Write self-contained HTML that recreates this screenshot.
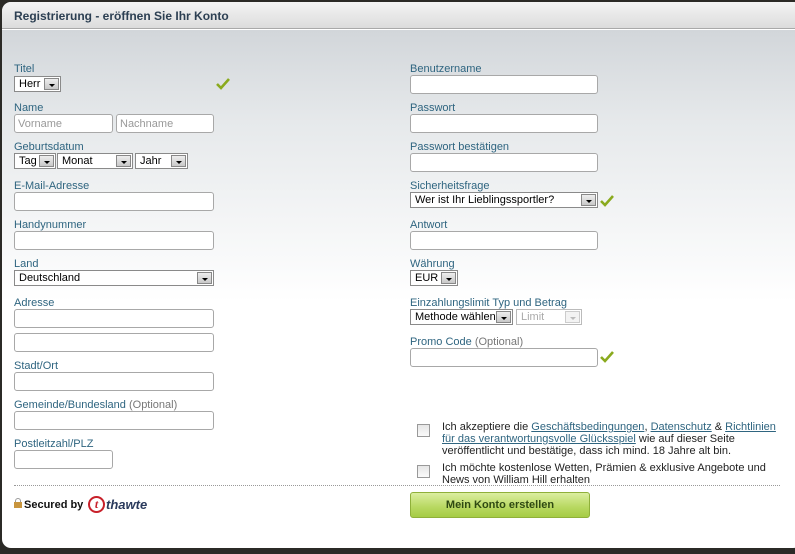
<!DOCTYPE html>
<html><head><meta charset="utf-8"><style>
*{box-sizing:border-box;margin:0;padding:0}
body{width:795px;height:554px;background:#2b2a26;position:relative;overflow:hidden;font-family:"Liberation Sans",Arial,sans-serif;font-size:11px}
#dlg{position:absolute;left:2px;top:2px;width:800px;height:546px;border-radius:9px;background:linear-gradient(#d2d6da 28px,#e6e9eb 120px,#fff 300px,#fff);overflow:hidden}
#hd{position:absolute;left:0;top:0;width:100%;height:27px;background:linear-gradient(#f4f4f4,#dcdcdc);border-bottom:1px solid #a9a9a9;box-shadow:0 1px 0 #fff}
#hd span{position:absolute;left:12px;top:7px;font-weight:bold;font-size:12px;color:#2c3f52}
.l{position:absolute;color:#2f6580;font-size:11px;white-space:nowrap}
.l i{font-style:normal;color:#777}
.in{position:absolute;height:19px;border:1px solid #a8a8a8;border-radius:3px;background:#fff;color:#999;padding:3px 3px;font-size:11px}
.sel{position:absolute;height:16px;border:1px solid #8a8a8a;background:#fff;color:#000;font-size:11px;padding:1px 4px;white-space:nowrap;overflow:hidden}
.sel b{position:absolute;right:1px;top:1px;width:15px;height:12px;background:linear-gradient(#eee,#c8c8c8);border:1px solid #888}
.sel b:after{content:"";position:absolute;left:4px;top:5px;border-left:3px solid transparent;border-right:3px solid transparent;border-top:3px solid #000}
.dis{color:#aaa;border-color:#bbb}.dis b{border-color:#ccc;background:#f3f3f3}.dis b:after{border-top-color:#bbb}
.ck{position:absolute;width:14px;height:12px}
.cb{position:absolute;width:13px;height:13px;border:1px solid #999;background:linear-gradient(#e6e6e6,#fafafa)}
.t{position:absolute;left:440px;width:340px;font-size:11px;line-height:12px;color:#222}
.t a{color:#2f6580;text-decoration:underline}
</style></head><body>
<div id="dlg">
<div id="hd"><span>Registrierung - eröffnen Sie Ihr Konto</span></div>
</div>
<svg width="0" height="0" style="position:absolute"><defs><symbol id="c" viewBox="0 0 14 12"><path d="M1 6 L5 10 L13 1" stroke="#8aaa1e" stroke-width="2.6" fill="none"/></symbol></defs></svg>

<div class="l" style="left:14px;top:63px">Titel</div>
<div class="sel" style="left:14px;top:76px;width:47px">Herr<b></b></div>
<svg class="ck" style="left:216px;top:78px"><use href="#c"/></svg>
<div class="l" style="left:14px;top:102px">Name</div>
<div class="in" style="left:14px;top:114px;width:99px">Vorname</div>
<div class="in" style="left:116px;top:114px;width:98px">Nachname</div>
<div class="l" style="left:14px;top:141px">Geburtsdatum</div>
<div class="sel" style="left:14px;top:153px;width:42px">Tag<b></b></div>
<div class="sel" style="left:57px;top:153px;width:76px">Monat<b></b></div>
<div class="sel" style="left:135px;top:153px;width:53px">Jahr<b></b></div>
<div class="l" style="left:14px;top:180px">E-Mail-Adresse</div>
<div class="in" style="left:14px;top:192px;width:200px"></div>
<div class="l" style="left:14px;top:219px">Handynummer</div>
<div class="in" style="left:14px;top:231px;width:200px"></div>
<div class="l" style="left:14px;top:258px">Land</div>
<div class="sel" style="left:14px;top:270px;width:200px">Deutschland<b></b></div>
<div class="l" style="left:14px;top:297px">Adresse</div>
<div class="in" style="left:14px;top:309px;width:200px"></div>
<div class="in" style="left:14px;top:333px;width:200px"></div>
<div class="l" style="left:14px;top:360px">Stadt/Ort</div>
<div class="in" style="left:14px;top:372px;width:200px"></div>
<div class="l" style="left:14px;top:399px">Gemeinde/Bundesland <i>(Optional)</i></div>
<div class="in" style="left:14px;top:411px;width:200px"></div>
<div class="l" style="left:14px;top:438px">Postleitzahl/PLZ</div>
<div class="in" style="left:14px;top:450px;width:99px"></div>

<div class="l" style="left:410px;top:63px">Benutzername</div>
<div class="in" style="left:410px;top:75px;width:188px"></div>
<div class="l" style="left:410px;top:102px">Passwort</div>
<div class="in" style="left:410px;top:114px;width:188px"></div>
<div class="l" style="left:410px;top:141px">Passwort bestätigen</div>
<div class="in" style="left:410px;top:153px;width:188px"></div>
<div class="l" style="left:410px;top:180px">Sicherheitsfrage</div>
<div class="sel" style="left:410px;top:192px;width:188px">Wer ist Ihr Lieblingssportler?<b></b></div>
<svg class="ck" style="left:600px;top:195px"><use href="#c"/></svg>
<div class="l" style="left:410px;top:219px">Antwort</div>
<div class="in" style="left:410px;top:231px;width:188px"></div>
<div class="l" style="left:410px;top:258px">Währung</div>
<div class="sel" style="left:410px;top:270px;width:48px">EUR<b></b></div>
<div class="l" style="left:410px;top:297px">Einzahlungslimit Typ und Betrag</div>
<div class="sel" style="left:410px;top:309px;width:103px">Methode wählen<b></b></div>
<div class="sel dis" style="left:516px;top:309px;width:66px">Limit<b></b></div>
<div class="l" style="left:410px;top:336px">Promo Code <i>(Optional)</i></div>
<div class="in" style="left:410px;top:348px;width:188px"></div>
<svg class="ck" style="left:600px;top:351px"><use href="#c"/></svg>

<div class="cb" style="left:417px;top:424px"></div>
<div class="t" style="top:421px;left:442px">Ich akzeptiere die <a>Geschäftsbedingungen</a>, <a>Datenschutz</a> &amp; <a>Richtlinien für das verantwortungsvolle Glücksspiel</a> wie auf dieser Seite veröffentlicht und bestätige, dass ich mind. 18 Jahre alt bin.</div>
<div class="cb" style="left:417px;top:465px"></div>
<div class="t" style="top:462px;left:442px">Ich möchte kostenlose Wetten, Prämien &amp; exklusive Angebote und News von William Hill erhalten</div>

<div style="position:absolute;left:14px;top:485px;width:766px;border-top:1px dotted #999"></div>
<div style="position:absolute;left:14px;top:498px;width:8px;height:10px">
<div style="position:absolute;left:1px;top:0;width:6px;height:6px;border:1.5px solid #999;border-bottom:none;border-radius:3px 3px 0 0"></div>
<div style="position:absolute;left:0;top:4px;width:8px;height:6px;background:#c8953e"></div></div>
<div style="position:absolute;left:24px;top:499px;font-weight:bold;font-size:11px;color:#111">Secured by</div>
<div style="position:absolute;left:88px;top:496px;width:17px;height:17px;border:2px solid #c8202a;border-radius:50%;color:#c8202a;font:bold italic 12px 'Liberation Serif',serif;text-align:center;line-height:13px">t</div>
<div style="position:absolute;left:106px;top:497px;font:bold italic 13px 'Liberation Sans',sans-serif;color:#2a3a5c">thawte</div>

<div style="position:absolute;left:410px;top:492px;width:180px;height:26px;border:1px solid #8fb03a;border-radius:3px;background:linear-gradient(#dbeea0,#b7d860 60%,#a6cc45);text-align:center;line-height:24px;font-weight:bold;font-size:11px;color:#2f4a12">Mein Konto erstellen</div>
</body></html>
